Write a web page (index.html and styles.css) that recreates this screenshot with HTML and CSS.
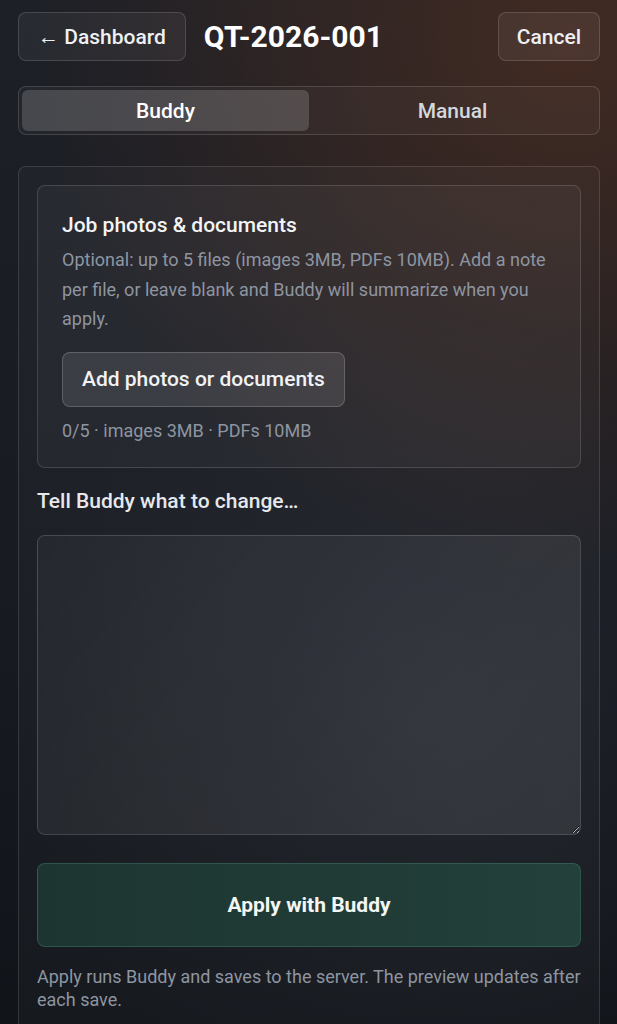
FILE: index.html
```html
<!DOCTYPE html>
<html lang="en">
<head>
<meta charset="UTF-8" />
<meta name="viewport" content="width=device-width, initial-scale=1" />
<title>QT-2026-001</title>
<link rel="stylesheet" href="styles.css">
</head>
<body>

  <!-- header -->
  <div class="topbar">
    <button class="ghost-btn">&larr; Dashboard</button>
    <h1 class="quote-id">QT-2026-001</h1>
    <button class="ghost-btn cancel-btn">Cancel</button>
  </div>

  <!-- mode tabs -->
  <div class="tabs">
    <button class="tab active">Buddy</button>
    <button class="tab">Manual</button>
  </div>

  <div class="card">
    <div class="attach-box">
      <h3>Job photos &amp; documents</h3>
      <p class="hint">Optional: up to 5 files (images 3MB, PDFs 10MB). Add a note per file, or leave blank and Buddy will summarize when you apply.</p>
      <button class="add-btn">Add photos or documents</button>
      <div class="count">0/5 · images 3MB · PDFs 10MB</div>
    </div>

    <label class="prompt-label" for="prompt">Tell Buddy what to change…</label>
    <textarea id="prompt" class="prompt"></textarea>

    <button class="apply-btn">Apply with Buddy</button>
    <p class="footnote">Apply runs Buddy and saves to the server. The preview updates after each save.</p>
  </div>

</body>
</html>
```

FILE: styles.css
```css
html {
  background: #14171d;
}
body {
  font-family: Roboto, 'Noto Sans', sans-serif;
  margin: 0;
  padding: 12px 17px 40px 18px;
  min-height: 1024px;
  box-sizing: border-box;
  color: #f1f3f6;
  background:
    radial-gradient(circle at 92% 4%, rgba(110, 55, 28, 0.45), rgba(110, 55, 28, 0) 45%),
    radial-gradient(circle at 70% 65%, rgba(60, 64, 74, 0.25), rgba(60, 64, 74, 0) 50%),
    linear-gradient(180deg, #1d2027 0%, #181b22 50%, #101318 100%);
}
button {
  font-family: inherit;
  cursor: pointer;
}
.topbar {
  display: flex;
  align-items: center;
  height: 49px;
}
.ghost-btn {
  height: 49px;
  padding: 0 19px;
  border-radius: 8px;
  border: 1px solid rgba(255, 255, 255, 0.14);
  background: rgba(255, 255, 255, 0.05);
  color: #eef0f3;
  font-size: 21px;
  font-weight: 500;
}
.quote-id {
  margin: 0 0 0 18px;
  font-size: 30px;
  font-weight: 700;
  color: #fff;
  flex: 1;
}
.cancel-btn {
  padding: 0 18px;
  background: rgba(255, 255, 255, 0.06);
}
.tabs {
  margin-top: 25px;
  display: flex;
  padding: 3px;
  border: 1px solid rgba(255, 255, 255, 0.14);
  border-radius: 8px;
  background: rgba(255, 255, 255, 0.03);
}
.tab {
  flex: 1;
  height: 41px;
  border: none;
  border-radius: 6px;
  background: transparent;
  color: #d4d7dc;
  font-size: 21px;
  font-weight: 500;
}
.tab.active {
  background: rgba(255, 255, 255, 0.16);
  color: #fff;
}
.card {
  margin-top: 31px;
  padding: 18px 18px 40px;
  border: 1px solid rgba(255, 255, 255, 0.12);
  border-radius: 8px;
  background: rgba(255, 255, 255, 0.025);
}
.attach-box {
  padding: 25px 24px 24px;
  border: 1px solid rgba(255, 255, 255, 0.14);
  border-radius: 8px;
  background: rgba(255, 255, 255, 0.035);
}
.attach-box h3 {
  margin: 0;
  font-size: 21px;
  line-height: 28px;
  font-weight: 500;
  color: #f3f4f6;
}
.hint {
  margin: 6px 0 0;
  font-size: 18px;
  line-height: 29.5px;
  color: #8e95a1;
}
.add-btn {
  margin-top: 18px;
  height: 55px;
  padding: 0 19px;
  border-radius: 8px;
  border: 1px solid rgba(255, 255, 255, 0.18);
  background: rgba(255, 255, 255, 0.1);
  color: #f1f2f4;
  font-size: 21px;
  font-weight: 500;
}
.count {
  margin-top: 12px;
  font-size: 18px;
  line-height: 24px;
  color: #8e95a1;
}
.prompt-label {
  display: block;
  margin-top: 20px;
  font-size: 21px;
  line-height: 26px;
  font-weight: 500;
  color: #e6e8ec;
}
.prompt {
  display: block;
  margin-top: 21px;
  width: 100%;
  height: 300px;
  box-sizing: border-box;
  border: 1px solid rgba(255, 255, 255, 0.14);
  border-radius: 8px;
  background: linear-gradient(135deg, rgba(255, 255, 255, 0.04), rgba(255, 255, 255, 0.09));
  color: #eee;
  font-family: inherit;
  font-size: 18px;
  padding: 12px;
}
.apply-btn {
  display: block;
  margin-top: 28px;
  width: 100%;
  height: 84px;
  border-radius: 8px;
  border: 1px solid rgba(70, 150, 120, 0.35);
  background: linear-gradient(90deg, #1d3530, #23403b);
  color: #f4f6f5;
  font-size: 21px;
  font-weight: 700;
}
.footnote {
  margin: 18px 0 0;
  font-size: 18px;
  line-height: 23px;
  color: #8e95a1;
}
```
